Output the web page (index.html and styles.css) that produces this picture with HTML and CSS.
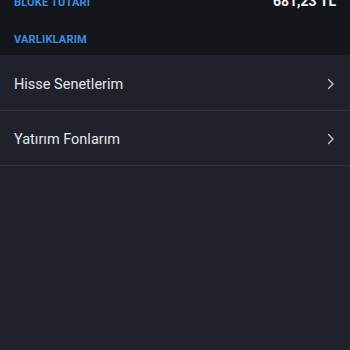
FILE: index.html
```html
<!DOCTYPE html>
<html lang="tr">
<head>
<meta charset="utf-8">
<link rel="stylesheet" href="styles.css">
</head>
<body>
<div class="page">
  <div class="top">
    <div class="summary-row">
      <span class="label">BLOKE TUTARI</span>
      <span class="amount">681,23 TL</span>
    </div>
    <div class="section-title">VARLIKLARIM</div>
  </div>
  <ul class="list">
    <li class="item"><span>Hisse Senetlerim</span>
      <svg class="chev" width="8" height="12" viewBox="0 0 8 12"><path d="M1.5 1.5 L6 6 L1.5 10.5" fill="none" stroke="#c3c4cc" stroke-width="1.4" stroke-linecap="round" stroke-linejoin="round"/></svg>
    </li>
    <li class="item"><span>Yatırım Fonlarım</span>
      <svg class="chev" width="8" height="12" viewBox="0 0 8 12"><path d="M1.5 1.5 L6 6 L1.5 10.5" fill="none" stroke="#c3c4cc" stroke-width="1.4" stroke-linecap="round" stroke-linejoin="round"/></svg>
    </li>
  </ul>
</div>
</body>
</html>
```
FILE: styles.css
```css
html, body {
  margin: 0;
  padding: 0;
  background: #1f212b;
  font-family: Roboto, "Liberation Sans", sans-serif;
}
.page {
  width: 350px;
  height: 350px;
  overflow: hidden;
  background: #1f212b;
}
.top {
  background: #15151c;
  height: 55px;
  padding: 0 14px;
  box-sizing: border-box;
  display: flex;
  flex-direction: column;
}
.summary-row {
  display: flex;
  justify-content: space-between;
  align-items: baseline;
  height: 22px;
  line-height: 22px;
  margin-top: -10px;
}
.label {
  color: #3a8ee2;
  font-size: 11px;
  font-weight: 700;
  letter-spacing: 0.2px;
}
.amount {
  color: #f2f2f5;
  font-size: 14px;
  font-weight: 700;
}
.section-title {
  margin-top: 21px;
  color: #3a8ee2;
  font-size: 11px;
  font-weight: 700;
  letter-spacing: 0.2px;
  line-height: 14px;
}
.list {
  list-style: none;
  margin: 0;
  padding: 0;
}
.item {
  height: 55px;
  box-sizing: border-box;
  border-bottom: 1px solid #32343f;
  display: flex;
  align-items: center;
  justify-content: space-between;
  padding: 2px 15px 0 14px;
  color: #e6e6eb;
  font-size: 14.5px;
}
.item:first-child {
  height: 56px;
  padding-top: 3px;
}
.chev {
  display: block;
}
```
